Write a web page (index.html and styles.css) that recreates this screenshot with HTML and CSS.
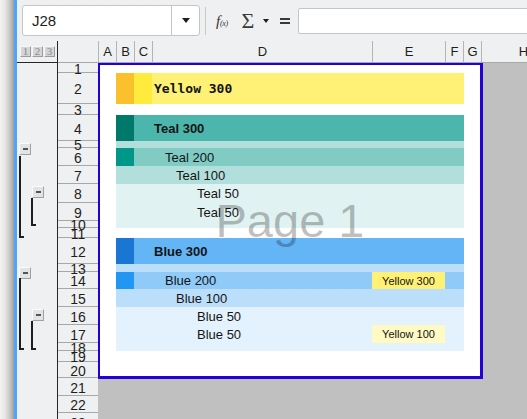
FILE: index.html
```html
<!DOCTYPE html>
<html>
<head>
<meta charset="utf-8">
<title>Sheet</title>
<link rel="stylesheet" href="styles.css">
</head>
<body>
<div class="app">
  <div class="edge"></div>
  <div class="main">
    <div class="toolbar">
      <div class="namebox"><span class="ref">J28</span><span class="nb-drop"><span class="tri"></span></span></div>
      <div class="sep"></div>
      <span class="fx"><span class="fx-f">f</span><span class="fx-x">(x)</span></span>
      <span class="sigma">Σ</span>
      <span class="tri tri-sm"></span>
      <span class="eq"></span>
      <div class="formula"></div>
    </div>
    <div class="colhead">
      <div class="levels"><span class="lvl">1</span><span class="lvl">2</span><span class="lvl">3</span></div>
      <div class="corner"></div>
      <div class="ch c-a">A</div>
      <div class="ch c-b">B</div>
      <div class="ch c-c">C</div>
      <div class="ch c-d">D</div>
      <div class="ch c-e">E</div>
      <div class="ch c-f">F</div>
      <div class="ch c-g">G</div>
      <div class="ch c-h">H</div>
    </div>
    <div class="body">
      <div class="outline">
        <span class="ob ob-t1"></span>
        <span class="br br-t1"></span>
        <span class="ob ob-t2"></span>
        <span class="br br-t2"></span>
        <span class="ob ob-b1"></span>
        <span class="br br-b1"></span>
        <span class="ob ob-b2"></span>
        <span class="br br-b2"></span>
      </div>
      <div class="rowheads">
        <div class="rh"><span>1</span></div>
        <div class="rh"><span>2</span></div>
        <div class="rh"><span>3</span></div>
        <div class="rh"><span>4</span></div>
        <div class="rh"><span>5</span></div>
        <div class="rh"><span>6</span></div>
        <div class="rh"><span>7</span></div>
        <div class="rh"><span>8</span></div>
        <div class="rh"><span>9</span></div>
        <div class="rh"><span>10</span></div>
        <div class="rh"><span>11</span></div>
        <div class="rh"><span>12</span></div>
        <div class="rh"><span>13</span></div>
        <div class="rh"><span>14</span></div>
        <div class="rh"><span>15</span></div>
        <div class="rh"><span>16</span></div>
        <div class="rh"><span>17</span></div>
        <div class="rh"><span>18</span></div>
        <div class="rh"><span>19</span></div>
        <div class="rh"><span>20</span></div>
        <div class="rh"><span>21</span></div>
        <div class="rh"><span>22</span></div>
        <div class="rh"><span>23</span></div>
      </div>
      <div class="canvas">
        <div class="page">
          <div class="prows">
            <div class="prow"></div>
            <div class="prow"><div class="band y300"><span class="sw y700"></span><span class="sw y500"></span><span class="lbl mono bold">Yellow 300</span></div></div>
            <div class="prow"></div>
            <div class="prow"><div class="band t300"><span class="sw t700"></span><span class="sw"></span><span class="lbl bold">Teal 300</span></div></div>
            <div class="prow"><div class="band t100"></div></div>
            <div class="prow"><div class="band t200"><span class="sw t500"></span><span class="sw"></span><span class="lbl in1">Teal 200</span></div></div>
            <div class="prow"><div class="band t100"><span class="sw"></span><span class="sw"></span><span class="lbl in2">Teal 100</span></div></div>
            <div class="prow"><div class="band t50"><span class="sw"></span><span class="sw"></span><span class="lbl in3">Teal 50</span></div></div>
            <div class="prow"><div class="band t50"><span class="sw"></span><span class="sw"></span><span class="lbl in3">Teal 50</span></div></div>
            <div class="prow"><div class="band t50"></div></div>
            <div class="prow"></div>
            <div class="prow"><div class="band b300"><span class="sw b700"></span><span class="sw"></span><span class="lbl bold">Blue 300</span></div></div>
            <div class="prow"><div class="band b100"></div></div>
            <div class="prow"><div class="band b200"><span class="sw b500"></span><span class="sw"></span><span class="lbl in1">Blue 200</span><span class="ecell y300">Yellow 300</span></div></div>
            <div class="prow"><div class="band b100"><span class="sw"></span><span class="sw"></span><span class="lbl in2">Blue 100</span></div></div>
            <div class="prow"><div class="band b50"><span class="sw"></span><span class="sw"></span><span class="lbl in3">Blue 50</span></div></div>
            <div class="prow"><div class="band b50"><span class="sw"></span><span class="sw"></span><span class="lbl in3">Blue 50</span><span class="ecell y100">Yellow 100</span></div></div>
            <div class="prow"><div class="band b50"></div></div>
            <div class="prow"></div>
            <div class="prow"></div>
          </div>
          <div class="watermark">Page 1</div>
        </div>
      </div>
    </div>
  </div>
</div>
</body>
</html>
```

FILE: styles.css
```css
* { box-sizing: border-box; }
html, body { margin: 0; padding: 0; }
body {
  width: 527px;
  height: 419px;
  overflow: hidden;
  background: #eff0f1;
  font-family: "Liberation Sans", Arial, sans-serif;
  color: #1e1e1e;
}
.app { display: flex; height: 419px; }
.edge {
  width: 17px;
  flex: none;
  background: linear-gradient(to right, #f3f3f3 0, #e6e6e6 5px, #c6c6c6 10px, #9e9e9e 14px, #4ea5fc 14px, #4ea5fc 17px);
}
.main { flex: 1; display: flex; flex-direction: column; min-width: 0; overflow: hidden; }

/* toolbar */
.toolbar { height: 41px; flex: none; display: flex; align-items: center; }
.namebox {
  flex: none;
  margin-left: 5px;
  width: 178px;
  height: 31px;
  background: #fff;
  border: 1px solid #c5c5c5;
  border-radius: 3px;
  display: flex;
}
.ref { flex: 1; padding-left: 9px; font-size: 15px; line-height: 29px; }
.nb-drop { width: 28px; border-left: 1px solid #c5c5c5; display: flex; align-items: center; justify-content: center; }
.tri { width: 0; height: 0; border-left: 4.5px solid transparent; border-right: 4.5px solid transparent; border-top: 5px solid #1e1e1e; }
.sep { flex: none; width: 1px; height: 28px; background: #c9c9c9; margin-left: 5px; }
.fx {
  flex: none;
  width: 16px;
  margin-left: 10px;
  margin-top: 1px;
  font-family: "Liberation Serif", serif;
  font-style: italic;
  color: #333;
  white-space: nowrap;
  line-height: 1;
  letter-spacing: -0.3px;
}
.fx-f { font-size: 15px; }
.fx-x { font-size: 8px; }
.sigma { flex: none; width: 16px; margin-left: 8px; font-family: "Liberation Serif", serif; font-size: 22px; line-height: 1; color: #3a3a3a; text-align: center; }
.tri-sm { flex: none; margin-left: 7px; border-left-width: 3.5px; border-right-width: 3.5px; border-top-width: 4px; }
.eq { flex: none; width: 10px; height: 6px; margin-left: 11px; border-top: 2px solid #3a3a34; border-bottom: 2px solid #3a3a34; }
.formula { flex: none; width: 240px; height: 26px; margin-left: 8px; margin-top: 1px; background: #fff; border: 1px solid #c5c5c5; border-radius: 2px 0 0 2px; }

/* column header */
.colhead { height: 22px; flex: none; display: flex; }
.levels {
  flex: none;
  width: 41px;
  border-right: 1px solid #262626;
  border-bottom: 1px solid #262626;
  display: flex;
  gap: 1px;
  padding: 5px 0 0 3px;
}
.lvl {
  width: 11px;
  height: 11px;
  background: #d5d5d5;
  border: 1px solid;
  border-color: #f6f6f6 #9c9c9c #9c9c9c #f6f6f6;
  font-family: "Liberation Serif", serif;
  font-size: 11px;
  line-height: 9px;
  text-align: center;
  color: #8a8a8a;
}
.corner { flex: none; width: 41px; border-right: 1px solid #b4b4b4; border-bottom: 1px solid #a8a8a8; }
.ch {
  flex: none;
  border-right: 1px solid #b4b4b4;
  border-bottom: 1px solid #a8a8a8;
  font-size: 13px;
  line-height: 21px;
  text-align: center;
}
.c-a, .c-b, .c-c, .c-f, .c-g { width: 18px; }
.c-d { width: 220px; }
.c-e { width: 73px; }
.c-h { width: 83px; border-right: none; }

/* body */
.body { flex: 1; display: flex; min-height: 0; overflow: hidden; }
.outline { flex: none; width: 41px; border-right: 1px solid #262626; position: relative; }
.ob {
  position: absolute;
  width: 12px;
  height: 12px;
  background: #e3e3e3;
  border: 1px solid;
  border-color: #fbfbfb #a2a2a2 #a2a2a2 #fbfbfb;
}
.ob::after {
  content: "";
  position: absolute;
  left: 2.5px;
  top: 4px;
  width: 5px;
  height: 2px;
  background: #555;
}
.br { position: absolute; width: 5px; border-left: 2px solid #1e1e1e; border-bottom: 2px solid #1e1e1e; }
.ob-t1 { left: 2px; top: 80px; }
.br-t1 { left: 2px; top: 93px; height: 82px; }
.ob-t2 { left: 15px; top: 123px; }
.br-t2 { left: 14px; top: 135px; height: 28px; }
.ob-b1 { left: 2px; top: 204px; }
.br-b1 { left: 2px; top: 215px; height: 72px; }
.ob-b2 { left: 15px; top: 246px; }
.br-b2 { left: 14px; top: 258px; height: 29px; }

.rowheads {
  flex: none;
  width: 40px;
  display: grid;
  grid-template-rows: 10px 31px 11px 26px 7px 18px 18px 19px 18px 7px 10px 26px 8px 17px 18px 18px 18px 8px 11px 16px 18px 17px 18px;
  align-content: start;
}
.rh {
  border-bottom: 1px solid #a8a8a8;
  display: flex;
  align-items: center;
  justify-content: center;
  font-size: 14px;
  line-height: 16px;
  min-height: 0;
}
.rh span { transform: translateY(1px); }

.canvas { flex: 1; background: #c0c0c0; min-width: 0; }
.page {
  position: relative;
  width: 385px;
  height: 316px;
  background: #fff;
  border-style: solid;
  border-color: #2200dc;
  border-width: 2px 3px 3px 2px;
}
.prows {
  height: 100%;
  display: grid;
  grid-template-rows: 8px 31px 11px 26px 7px 18px 18px 19px 18px 7px 10px 26px 8px 17px 18px 18px 18px 8px 11px 1fr;
}
.prow { min-height: 0; }
.band {
  margin-left: 16px;
  width: 348px;
  height: 100%;
  display: grid;
  grid-template-columns: 18px 18px 220px 73px 19px;
  align-items: center;
  font-size: 13px;
  color: #141414;
}
.sw { align-self: stretch; }
.lbl { padding-left: 2px; white-space: nowrap; }
.lbl.in1 { padding-left: 13px; }
.lbl.in2 { padding-left: 24px; }
.lbl.in3 { padding-left: 45px; }
.bold { font-weight: bold; }
.mono { font-family: "DejaVu Sans Mono", monospace; }
.ecell { align-self: stretch; display: flex; align-items: center; justify-content: center; font-size: 11px; }

.y700 { background: #fbc02d; }
.y500 { background: #ffeb3b; }
.y300 { background: #fff176; }
.y100 { background: #fff9c4; }
.t700 { background: #00796b; }
.t500 { background: #009688; }
.t300 { background: #4db6ac; }
.t200 { background: #80cbc4; }
.t100 { background: #b2dfdb; }
.t50 { background: #e0f2f1; }
.b700 { background: #1976d2; }
.b500 { background: #2196f3; }
.b300 { background: #64b5f6; }
.b200 { background: #90caf9; }
.b100 { background: #bbdefb; }
.b50 { background: #e3f2fd; }

.watermark {
  position: absolute;
  inset: 0;
  display: flex;
  align-items: center;
  justify-content: center;
  font-size: 47px;
  color: rgba(0, 0, 0, 0.25);
  pointer-events: none;
}
```
